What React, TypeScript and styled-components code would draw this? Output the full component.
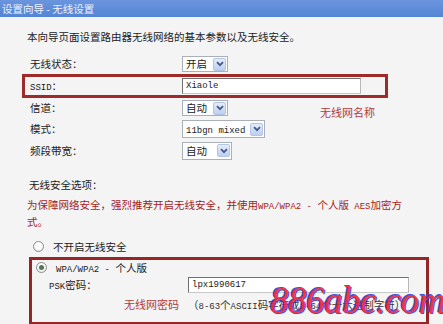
import React from 'react';
import styled, { createGlobalStyle } from 'styled-components';

const GlobalStyle = createGlobalStyle`
  html, body {
    margin: 0;
    padding: 0;
    background: #f4f4f4;
  }
  body {
    font-family: "Noto Sans CJK SC", "Liberation Sans", sans-serif;
    font-size: 10.5px;
    color: #222;
  }
`;

const Page = styled.div`
  position: relative;
  width: 443px;
  height: 324px;
  overflow: hidden;
  background: #f4f4f4;
`;

const TitleBar = styled.div`
  height: 17px;
  line-height: 17px;
  padding-left: 2px;
  background: linear-gradient(#6b95de, #5484d4);
  color: #eef3ff;
  font-size: 10.5px;
  white-space: pre;
`;

const Body = styled.div`
  padding-left: 22px;
`;

const Intro = styled.div`
  margin: 12px 0 9px 5px;
  line-height: 16px;
  height: 16px;
`;

const Mono = styled.span`
  font-family: "Liberation Mono", monospace;
  font-size: 9px;
  line-height: 1;
  white-space: pre;
`;

const FieldRow = styled.div<{ $h: number; $boxed?: boolean }>`
  display: flex;
  align-items: center;
  box-sizing: border-box;
  width: 366px;
  height: ${p => p.$h}px;
  padding-left: 5px;
  border: 3px solid ${p => (p.$boxed ? '#9e2a2a' : 'transparent')};
`;

const Label = styled.div<{ $w: number }>`
  width: ${p => p.$w}px;
  flex-shrink: 0;
  line-height: 14px;
`;

const SelectBox = styled.div<{ $w: number; $h: number }>`
  width: ${p => p.$w}px;
  height: ${p => p.$h}px;
  box-sizing: border-box;
  border: 1px solid #a9b0ba;
  background: #fff;
  display: flex;
  align-items: center;
  justify-content: space-between;
  padding: 0 1px 0 3px;
  line-height: 12px;
`;

const ArrowBtn = styled.span`
  width: 13px;
  height: 13px;
  box-sizing: border-box;
  border: 1px solid #b3c5e3;
  border-radius: 2px;
  background: linear-gradient(#e4ecfa, #bdd0f0);
  display: flex;
  align-items: center;
  justify-content: center;
`;

const TextInput = styled.div<{ $w: number }>`
  width: ${p => p.$w}px;
  height: 16px;
  box-sizing: border-box;
  border: 1px solid #707070;
  border-right-color: #b8b8b8;
  border-bottom-color: #c8c8c8;
  background: #fff;
  display: flex;
  align-items: center;
  padding-left: 3px;
`;

const Note = styled.span<{ $gap: number; $drop?: number }>`
  margin-left: ${p => p.$gap}px;
  margin-top: ${p => (p.$drop ?? 0) * 2}px;
  color: #b23a3a;
  font-size: 11px;
`;

const SectionTitle = styled.div`
  margin: 16px 0 0 7px;
  line-height: 16px;
`;

const Warning = styled.div`
  margin: 3px 0 0 5px;
  width: 382px;
  line-height: 17px;
  color: #a31d1c;
`;

const RadioRow = styled.div<{ $h: number }>`
  display: flex;
  align-items: center;
  height: ${p => p.$h}px;
  padding-left: 4px;
  gap: 9px;
`;

const Radio = styled.span<{ $checked?: boolean }>`
  width: 11px;
  height: 11px;
  box-sizing: border-box;
  border-radius: 50%;
  border: 1px solid #8c8c8c;
  background: radial-gradient(circle at 50% 40%, #fff 40%, #dedede 100%);
  display: flex;
  align-items: center;
  justify-content: center;
  &::after {
    content: '';
    width: 5px;
    height: 5px;
    border-radius: 50%;
    background: ${p => (p.$checked ? '#4f7a50' : 'transparent')};
  }
`;

const Options = styled.div`
  margin: 8px 0 0 7px;
`;

const SecurityBox = styled.div`
  margin-top: 3px;
  width: 400px;
  box-sizing: border-box;
  border: 3px solid #962626;
  padding-bottom: 10px;
`;

const BoxRow = styled.div<{ $h: number }>`
  display: flex;
  align-items: center;
  height: ${p => p.$h}px;
  padding-left: 17px;
`;

const Hint = styled.span`
  color: #333;
  white-space: nowrap;
`;

const Watermark = styled.div`
  position: absolute;
  left: 270px;
  top: 279px;
  font-family: "Liberation Serif", serif;
  font-style: italic;
  font-size: 37px;
  letter-spacing: -0.5px;
  color: #ee2230;
  text-shadow: -1px -1px 0 #2a3fe0, 1px 1px 0 #2a3fe0;
  opacity: 0.9;
  white-space: nowrap;
  pointer-events: none;
`;

function Chevron() {
  return (
    <svg width="8" height="6" viewBox="0 0 8 6">
      <path d="M1 1.2 L4 4.2 L7 1.2" fill="none" stroke="#44598a" strokeWidth="1.8" />
    </svg>
  );
}

function Select({ w, h = 16, children }: { w: number; h?: number; children: React.ReactNode }) {
  return (
    <SelectBox $w={w} $h={h}>
      <span>{children}</span>
      <ArrowBtn>
        <Chevron />
      </ArrowBtn>
    </SelectBox>
  );
}

export default function App() {
  return (
    <Page>
      <GlobalStyle />
      <TitleBar>设置向导 - 无线设置</TitleBar>
      <Body>
        <Intro>本向导页面设置路由器无线网络的基本参数以及无线安全。</Intro>

        <FieldRow $h={20}>
          <Label $w={152}>无线状态：</Label>
          <Select w={46}>开启</Select>
        </FieldRow>
        <FieldRow $h={24} $boxed>
          <Label $w={152}>
            <Mono>SSID</Mono>：
          </Label>
          <TextInput $w={179}>
            <Mono>Xiaole</Mono>
          </TextInput>
        </FieldRow>
        <FieldRow $h={20}>
          <Label $w={152}>信道：</Label>
          <Select w={46}>自动</Select>
          <Note $gap={92} $drop={4}>无线网名称</Note>
        </FieldRow>
        <FieldRow $h={22}>
          <Label $w={152}>模式：</Label>
          <Select w={83} h={18}>
            <Mono>11bgn mixed</Mono>
          </Select>
        </FieldRow>
        <FieldRow $h={21}>
          <Label $w={152}>频段带宽：</Label>
          <Select w={50} h={18}>自动</Select>
        </FieldRow>

        <SectionTitle>无线安全选项：</SectionTitle>
        <Warning>
          为保障网络安全，强烈推荐开启无线安全，并使用<Mono>WPA/WPA2 - </Mono>个人版<Mono> AES</Mono>加密方式。
        </Warning>

        <Options>
          <RadioRow $h={16}>
            <Radio />
            <span>不开启无线安全</span>
          </RadioRow>

          <SecurityBox>
            <RadioRow $h={14}>
              <Radio $checked />
              <span>
                <Mono>WPA/WPA2 - </Mono>个人版
              </span>
            </RadioRow>
            <BoxRow $h={22}>
              <Label $w={139}>
                <Mono>PSK</Mono>密码：
              </Label>
              <TextInput $w={221}>
                <Mono>lpx1990617</Mono>
              </TextInput>
            </BoxRow>
            <BoxRow $h={16}>
              <Label $w={139}>
                <Note $gap={75}>无线网密码</Note>
              </Label>
              <Hint>
                （<Mono>8-63</Mono>个<Mono>ASCII</Mono>码字符或<Mono>8-64</Mono>个十六进制字符）
              </Hint>
            </BoxRow>
          </SecurityBox>
        </Options>
      </Body>
      <Watermark>886abc.com</Watermark>
    </Page>
  );
}
